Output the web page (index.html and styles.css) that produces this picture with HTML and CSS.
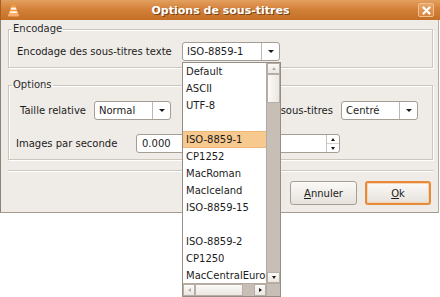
FILE: index.html
```html
<!DOCTYPE html>
<html lang="fr">
<head>
    <meta charset="UTF-8">
    <title>Options de sous-titres</title>
    <link rel="stylesheet" href="styles.css">
</head>
<body>
    <div class="window">
        <div class="titlebar">
            <svg class="app-icon" width="11" height="13" viewBox="0 0 11 13">
                <path d="M4 0.5h3l3.2 9.5H0.8z" fill="#f49a3c"/>
                <path d="M3.2 3.6h4.6l0.8 2.2H2.4z" fill="#fff4e8"/>
                <path d="M2 7.2h7l0.7 2H1.3z" fill="#fff4e8"/>
                <rect x="0" y="9.8" width="11" height="2.6" rx="1" fill="#f7b070"/>
            </svg>
            <div class="title">Options de sous-titres</div>
            <div class="close">
                <svg width="9" height="9" viewBox="0 0 9 9">
                    <path d="M1.5 1.5l6 6M7.5 1.5l-6 6" stroke="#fff" stroke-width="2.2" stroke-linecap="round"/>
                </svg>
            </div>
        </div>

        <div class="dialog">
            <fieldset class="frame enc">
                <legend>Encodage</legend>
                <div class="inner">
                    <div class="row">
                        <span class="label enc-label">Encodage des sous-titres texte</span>
                        <div class="combo enc-combo"><span class="value">ISO-8859-1</span><span class="arrow"></span></div>
                    </div>
                </div>
            </fieldset>

            <fieldset class="frame opts">
                <legend>Options</legend>
                <div class="inner">
                    <div class="row first">
                        <span class="label size-label">Taille relative</span>
                        <div class="combo small-combo"><span class="value">Normal</span><span class="arrow"></span></div>
                        <span class="label align-label">Alignement des sous-titres</span>
                        <div class="combo small-combo"><span class="value">Centré</span><span class="arrow"></span></div>
                    </div>
                    <div class="row second">
                        <span class="label fps-label">Images par seconde</span>
                        <div class="spin">
                            <span class="value">0.000</span>
                            <span class="spin-btns">
                                <span class="spin-up"></span>
                                <span class="spin-down"></span>
                            </span>
                        </div>
                    </div>
                </div>
            </fieldset>

            <div class="separator"></div>

            <div class="buttons">
                <button class="btn"><u>A</u>nnuler</button>
                <button class="btn default"><u>O</u>k</button>
            </div>
        </div>

        <div class="popup">
            <ul class="list">
                <li>Default</li>
                <li>ASCII</li>
                <li>UTF-8</li>
                <li class="blank"></li>
                <li class="selected">ISO-8859-1</li>
                <li>CP1252</li>
                <li>MacRoman</li>
                <li>MacIceland</li>
                <li>ISO-8859-15</li>
                <li class="blank"></li>
                <li>ISO-8859-2</li>
                <li>CP1250</li>
                <li>MacCentralEurope</li>
            </ul>
            <div class="vscroll">
                <span class="sb-btn up disabled"></span>
                <span class="sb-thumb"></span>
                <span class="sb-trough"></span>
                <span class="sb-btn down"></span>
            </div>
            <div class="hscroll">
                <span class="sb-btn left disabled"></span>
                <span class="sb-thumb"></span>
                <span class="sb-trough"></span>
                <span class="sb-btn right"></span>
            </div>
            <div class="corner"></div>
        </div>
    </div>
</body>
</html>
```

FILE: styles.css
```css
* {
    box-sizing: border-box;
}

body {
    margin: 0;
    font-family: "DejaVu Sans", sans-serif;
    font-size: 10px;
    color: #1c1c1c;
    background-color: #ffffff;
}

.window {
    position: relative;
    width: 440px;
    height: 297px;
    overflow: hidden;
}

/* title bar */

.titlebar {
    height: 20px;
    display: flex;
    align-items: center;
    padding: 0 6px 0 7px;
    background: linear-gradient(#e3a060, #d3813a 45%, #c56f27);
    border-left: 1px solid #a8601f;
}

.app-icon {
    flex: none;
}

.title {
    flex: 1;
    text-align: center;
    color: #ffffff;
    font-weight: bold;
    font-size: 11px;
    text-shadow: 1px 1px 0 #7a4312;
    padding-left: 4px;
}

.close {
    width: 16px;
    height: 14px;
    border: 1px solid #f3c08c;
    border-radius: 2px;
    background: linear-gradient(#e7a76a, #d48541);
    display: flex;
    align-items: center;
    justify-content: center;
}

/* dialog body */

.dialog {
    width: 439px;
    height: 193px;
    background-color: #efebe7;
    border-left: 1px solid #8d8175;
    border-right: 1px solid #b5aa9f;
    border-bottom: 1px solid #a59a8f;
    padding: 3px 5px 0 7px;
}

.frame {
    margin: 0;
    padding: 0;
    min-width: 0;
    border: 1px solid #cdc6bd;
    box-shadow: inset 1px 1px 0 #ffffff, 1px 1px 0 #ffffff;
}

.frame legend {
    margin-left: 3px;
    padding: 0 1px;
    line-height: 12px;
    color: #2a2a2a;
}

.enc .inner {
    padding: 7px 0 6px 8px;
}

.opts {
    margin-top: 11px;
}

.opts .inner {
    padding: 10px 14px 6px 0;
}

.row {
    display: flex;
    align-items: center;
    height: 19px;
}

.row.first {
    padding-left: 11px;
}

.row.second {
    margin-top: 14px;
    padding-left: 7px;
}

.label {
    white-space: nowrap;
}

.enc-label {
    width: 165px;
}

.size-label {
    width: 74px;
}

.align-label {
    flex: 1;
    text-align: right;
    padding-right: 8px;
}

.fps-label {
    width: 120px;
}

/* combo boxes */

.combo {
    display: flex;
    height: 19px;
    background-color: #ffffff;
    border: 1px solid #a39d96;
    border-radius: 3px;
}

.enc-combo {
    width: 98px;
}

.small-combo {
    width: 77px;
}

.combo .value {
    flex: 1;
    padding-left: 4px;
    line-height: 17px;
}

.combo .arrow {
    width: 18px;
    border-left: 1px solid #bdb7b0;
    display: flex;
    align-items: center;
    justify-content: center;
}

.combo .arrow::after {
    content: "";
    border-left: 3px solid transparent;
    border-right: 3px solid transparent;
    border-top: 3px solid #1a1a1a;
}

/* spin entry */

.spin {
    display: flex;
    width: 204px;
    height: 19px;
    background-color: #ffffff;
    border: 1px solid #a39d96;
    border-radius: 3px;
}

.spin .value {
    flex: 1;
    padding-left: 5px;
    line-height: 17px;
}

.spin-btns {
    width: 13px;
    border-left: 1px solid #c8c2bb;
    display: flex;
    flex-direction: column;
}

.spin-up,
.spin-down {
    flex: 1;
    display: flex;
    align-items: center;
    justify-content: center;
}

.spin-up {
    border-bottom: 1px solid #d6d0c9;
}

.spin-up::after {
    content: "";
    border-left: 2.5px solid transparent;
    border-right: 2.5px solid transparent;
    border-bottom: 3px solid #1a1a1a;
}

.spin-down::after {
    content: "";
    border-left: 2.5px solid transparent;
    border-right: 2.5px solid transparent;
    border-top: 3px solid #1a1a1a;
}

/* bottom buttons */

.separator {
    margin-top: 10px;
    height: 2px;
    border-top: 1px solid #cdc6bd;
    border-bottom: 1px solid #ffffff;
}

.buttons {
    display: flex;
    justify-content: flex-end;
    gap: 8px;
    margin-top: 9px;
    padding-right: 2px;
}

.btn {
    width: 67px;
    height: 24px;
    font-family: "DejaVu Sans", sans-serif;
    font-size: 10px;
    color: #1c1c1c;
    background: linear-gradient(#fbfaf8, #e6e1db);
    border: 1px solid #a79f96;
    border-radius: 3px;
    padding: 0;
}

.btn.default {
    width: 66px;
    border: 2px solid #e58b3d;
    box-shadow: inset 0 0 0 1px #f7d3b0;
}

/* encoding popup list */

.popup {
    position: absolute;
    left: 182px;
    top: 62px;
    width: 99px;
    height: 235px;
    background-color: #ffffff;
    border: 1px solid #968e85;
    display: grid;
    grid-template-columns: 1fr 14px;
    grid-template-rows: 1fr 13px;
}

.list {
    list-style: none;
    margin: 0;
    padding: 0;
    overflow: hidden;
}

.list li {
    height: 17px;
    line-height: 17px;
    padding-left: 3px;
    white-space: nowrap;
}

.list li.selected {
    background-color: #f7c98e;
    box-shadow: inset 0 1px 0 #efb777, inset 0 -1px 0 #efb777;
}

.vscroll {
    display: flex;
    flex-direction: column;
    border-left: 1px solid #b3aba2;
    background-color: #c7bfb5;
}

.hscroll {
    display: flex;
    border-top: 1px solid #b3aba2;
    background-color: #c7bfb5;
}

.corner {
    background-color: #c7bfb5;
    border-top: 1px solid #b3aba2;
    border-left: 1px solid #b3aba2;
}

.sb-btn {
    flex: none;
    display: flex;
    align-items: center;
    justify-content: center;
    background: linear-gradient(#fbfaf8, #ebe7e2);
    border: 1px solid #b7afa6;
}

.vscroll .sb-btn {
    height: 11px;
}

.hscroll .sb-btn {
    width: 12px;
}

.sb-thumb {
    flex: none;
    background: linear-gradient(90deg, #fbfaf8, #ebe7e2);
    border: 1px solid #b7afa6;
}

.vscroll .sb-thumb {
    height: 29px;
}

.hscroll .sb-thumb {
    width: 48px;
    background: linear-gradient(#fbfaf8, #ebe7e2);
}

.sb-trough {
    flex: 1;
}

.sb-btn.up::after {
    content: "";
    border-left: 2.5px solid transparent;
    border-right: 2.5px solid transparent;
    border-bottom: 3px solid #1a1a1a;
}

.sb-btn.down::after {
    content: "";
    border-left: 2.5px solid transparent;
    border-right: 2.5px solid transparent;
    border-top: 3px solid #1a1a1a;
}

.sb-btn.left::after {
    content: "";
    border-top: 2.5px solid transparent;
    border-bottom: 2.5px solid transparent;
    border-right: 3px solid #1a1a1a;
}

.sb-btn.right::after {
    content: "";
    border-top: 2.5px solid transparent;
    border-bottom: 2.5px solid transparent;
    border-left: 3px solid #1a1a1a;
}

.sb-btn.disabled::after {
    opacity: 0.3;
}
```
